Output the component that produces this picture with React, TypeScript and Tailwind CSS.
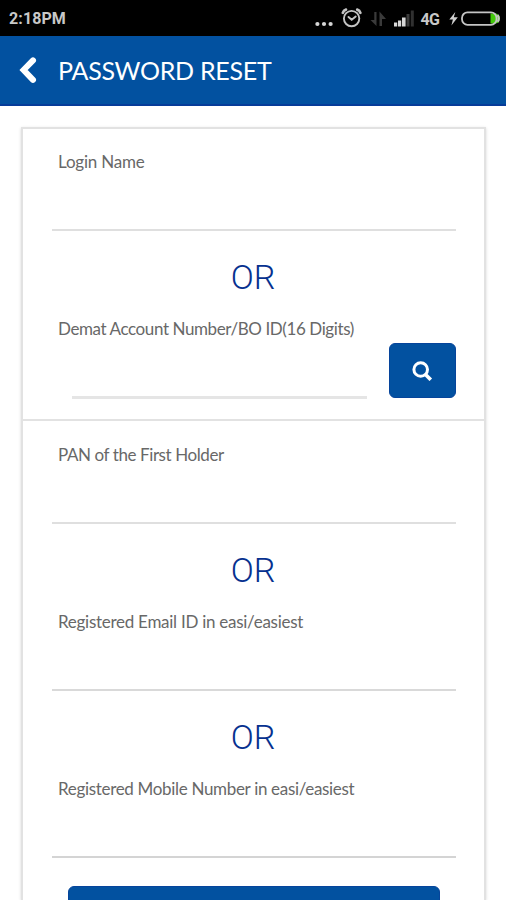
import type { ReactNode } from 'react';

interface FieldProps {
  id: string;
  label: ReactNode;
  /** Letter spacing of the label */
  tracking?: string;
  /** Underline style of the input */
  line?: string;
}

function StatusBar() {
  return (
    <div className="flex h-9 shrink-0 items-center justify-between bg-black pt-px pl-[9px] text-[#c8c8c8]">
      <span className="font-['Roboto',sans-serif] text-base leading-5 font-bold tracking-[0.1px]">2:18PM</span>
      <svg width="206" height="36" viewBox="300 0 206 36" fill="none" aria-hidden>
        {/* More notifications */}
        <g fill="#d5d5d5">
          <circle cx="317.4" cy="23" r="2.1" />
          <circle cx="324" cy="23" r="2.1" />
          <circle cx="330.6" cy="23" r="2.1" />
        </g>
        {/* Alarm */}
        <g stroke="#c4c4c4" strokeWidth="1.9" strokeLinecap="round">
          <circle cx="351.6" cy="17.6" r="7.7" />
          <path d="M348.5 16l3.2 2.8 4-3.3" />
          <path d="M342.8 11.8c.5-1.6 1.6-2.7 3.2-3.2M360.4 11.8c-.5-1.6-1.6-2.7-3.2-3.2" strokeWidth="2.7" />
        </g>
        {/* Data transfer */}
        <path d="M376.5 11v14l-6-6h3.8v-8zM379.5 25V10.5l6.5 7.5h-4v7z" fill="#3a3a3a" />
        {/* Signal */}
        <g fill="#d8d8d8">
          <rect x="394" y="21.5" width="3.2" height="4" />
          <rect x="398" y="19.5" width="3.2" height="6" />
          <rect x="402" y="16.5" width="3.6" height="9" />
          <rect x="406.5" y="13" width="3" height="12.5" fill="#3b3b3b" />
          <rect x="410.8" y="9.5" width="3" height="16" fill="#303030" />
        </g>
        <text x="420.5" y="23.8" fill="#c8c8c8" className="font-['Roboto',sans-serif] text-base font-bold" textLength="19.5">
          4G
        </text>
        {/* Battery */}
        <path d="M455.3 11L449.3 18.5h3.6l-1.5 6 6.4-8.2h-4z" fill="#d0d0d0" />
        <path d="M490.5 12.6h4.5a5 5 0 0 1 0 10h-4.5z" fill="#41c909" />
        <rect x="462" y="11.4" width="34.5" height="12.4" rx="5.5" stroke="#c4c4c4" strokeWidth="1.8" />
        <path d="M497.5 14.1c1.7 1.6 1.7 5 0 6.6" stroke="#c4c4c4" strokeWidth="2.2" />
      </svg>
    </div>
  );
}

function Label({ id, children, tracking = 'tracking-normal' }: { id: string; children: ReactNode; tracking?: string }) {
  return (
    <label htmlFor={id} className={`mt-px -mb-px ml-[6px] block h-5 text-[17px] leading-5 whitespace-nowrap text-[#686868] ${tracking}`}>
      {children}
    </label>
  );
}

function Field({ id, label, tracking, line = 'border-b-2 border-[#dfdfdf]' }: FieldProps) {
  return (
    <div className="flex h-20 flex-col">
      <Label id={id} tracking={tracking}>{label}</Label>
      <input id={id} className={`min-h-0 w-full flex-1 outline-none ${line}`} />
    </div>
  );
}

function Or() {
  return (
    <div className="flex h-[87px] items-center justify-center pt-[4px] pr-[2px] font-['Roboto',sans-serif] text-[34px] leading-10 font-[350] text-[#06318f]">
      OR
    </div>
  );
}

export default function App() {
  return (
    <div className="flex h-screen flex-col overflow-hidden bg-white font-['Lato',sans-serif]">
      <StatusBar />
      <header className="flex h-[70px] shrink-0 items-center border-b-2 border-[#063c99] bg-[#0251a0] pl-[18px] text-white">
        <button type="button" aria-label="Back" className="flex">
          <svg width="20" height="30" viewBox="0 0 20 30" fill="none" aria-hidden>
            <path d="M15 5.4L5.6 15l9.4 9.8" stroke="white" strokeWidth="6" strokeLinecap="round" />
          </svg>
        </button>
        <h1 className="ml-[20px] text-[25px] leading-8 tracking-[-0.28px] whitespace-nowrap">PASSWORD RESET</h1>
      </header>

      <main className="mt-[21px] mr-[20px] ml-[21px] min-h-0 flex-1 border-x-2 border-t-2 border-[#e2e2e2] shadow-[0_1px_3px_#d8d8d8]">
        <section className="h-[292px] border-b-2 border-[#e2e2e2] pt-[22px] pr-[28px] pl-[29px]">
          <Field id="login" label="Login Name" tracking="tracking-[-0.2px]" />
          <Or />
          <Label id="demat" tracking="tracking-[-0.4px]">Demat Account Number/BO ID(16 Digits)</Label>
          <div className="mt-[5px] flex h-[56px] justify-between pl-[20px]">
            <input id="demat" className="w-[295px] border-b-[3px] border-[#e5e5e5] outline-none" />
            <button type="button" aria-label="Search" className="flex h-[55px] w-[67px] items-center justify-center rounded-[6px] border border-[#06449b] bg-[#0251a0]">
              <svg width="21" height="20" viewBox="0 0 21 20" fill="none" aria-hidden>
                <circle cx="8.7" cy="8.5" r="6.8" stroke="white" strokeWidth="3" />
                <path d="M13 13l5.8 5.8" stroke="white" strokeWidth="3.6" />
              </svg>
            </button>
          </div>
        </section>

        <section className="pt-[23px] pr-[28px] pl-[29px]">
          <Field id="pan" label="PAN of the First Holder" tracking="tracking-[-0.41px]" />
          <Or />
          <Field id="email" label="Registered Email ID in easi/easiest" tracking="tracking-[-0.27px]" line="border-b-2 border-[#d9d9d9]" />
          <Or />
          <Field id="mobile" label="Registered Mobile Number in easi/easiest" tracking="tracking-[-0.32px]" line="border-b-2 border-[#d4d4d4]" />
          <button type="button" aria-label="Submit" className="mx-4 mt-7 block h-14 w-[372px] rounded-[6px] border border-[#06449b] bg-[#0251a0]" />
        </section>
      </main>
    </div>
  );
}
